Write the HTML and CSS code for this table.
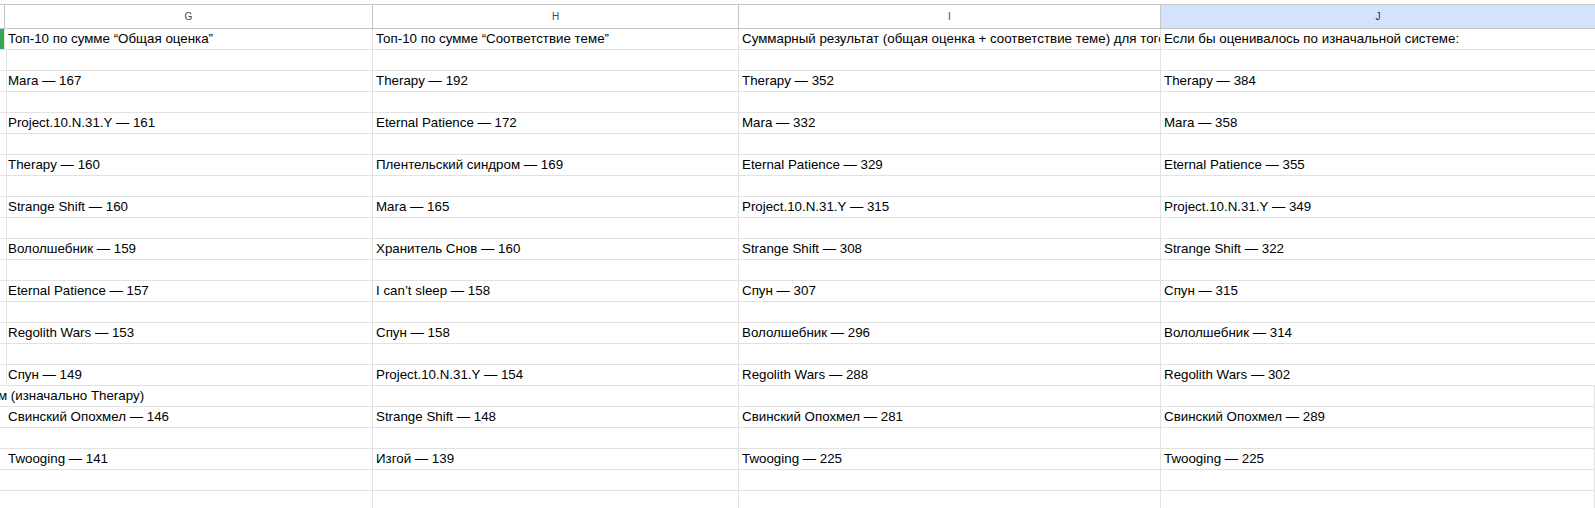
FILE: index.html
```html
<!DOCTYPE html>
<html lang="ru">
<head>
<meta charset="utf-8">
<title>Sheet</title>
<link rel="stylesheet" href="styles.css">
</head>
<body>
<div class="sheet">
  <div class="grid header">
    <div class="hcell"></div>
    <div class="hcell">G</div>
    <div class="hcell">H</div>
    <div class="hcell">I</div>
    <div class="hcell selected">J</div>
  </div>
  <div class="grid">
    <div class="cell active-mark"></div>
    <div class="cell">Топ-10 по сумме “Общая оценка”</div>
    <div class="cell">Топ-10 по сумме “Соответствие теме”</div>
    <div class="cell">Суммарный результат (общая оценка + соответствие теме) для того, чтобы узнать итоговое место</div>
    <div class="cell">Если бы оценивалось по изначальной системе:</div>

    <div class="cell"></div><div class="cell"></div><div class="cell"></div><div class="cell"></div><div class="cell"></div>

    <div class="cell"></div>
    <div class="cell">Mara — 167</div>
    <div class="cell">Therapy — 192</div>
    <div class="cell">Therapy — 352</div>
    <div class="cell">Therapy — 384</div>

    <div class="cell"></div><div class="cell"></div><div class="cell"></div><div class="cell"></div><div class="cell"></div>

    <div class="cell"></div>
    <div class="cell">Project.10.N.31.Y — 161</div>
    <div class="cell">Eternal Patience — 172</div>
    <div class="cell">Mara — 332</div>
    <div class="cell">Mara — 358</div>

    <div class="cell"></div><div class="cell"></div><div class="cell"></div><div class="cell"></div><div class="cell"></div>

    <div class="cell"></div>
    <div class="cell">Therapy — 160</div>
    <div class="cell">Плентельский синдром — 169</div>
    <div class="cell">Eternal Patience — 329</div>
    <div class="cell">Eternal Patience — 355</div>

    <div class="cell"></div><div class="cell"></div><div class="cell"></div><div class="cell"></div><div class="cell"></div>

    <div class="cell"></div>
    <div class="cell">Strange Shift — 160</div>
    <div class="cell">Mara — 165</div>
    <div class="cell">Project.10.N.31.Y — 315</div>
    <div class="cell">Project.10.N.31.Y — 349</div>

    <div class="cell"></div><div class="cell"></div><div class="cell"></div><div class="cell"></div><div class="cell"></div>

    <div class="cell"></div>
    <div class="cell">Вололшебник — 159</div>
    <div class="cell">Хранитель Снов — 160</div>
    <div class="cell">Strange Shift — 308</div>
    <div class="cell">Strange Shift — 322</div>

    <div class="cell"></div><div class="cell"></div><div class="cell"></div><div class="cell"></div><div class="cell"></div>

    <div class="cell"></div>
    <div class="cell">Eternal Patience — 157</div>
    <div class="cell">I can’t sleep — 158</div>
    <div class="cell">Спун — 307</div>
    <div class="cell">Спун — 315</div>

    <div class="cell"></div><div class="cell"></div><div class="cell"></div><div class="cell"></div><div class="cell"></div>

    <div class="cell"></div>
    <div class="cell">Regolith Wars — 153</div>
    <div class="cell">Спун — 158</div>
    <div class="cell">Вололшебник — 296</div>
    <div class="cell">Вололшебник — 314</div>

    <div class="cell"></div><div class="cell"></div><div class="cell"></div><div class="cell"></div><div class="cell"></div>

    <div class="cell"></div>
    <div class="cell">Спун — 149</div>
    <div class="cell">Project.10.N.31.Y — 154</div>
    <div class="cell">Regolith Wars — 288</div>
    <div class="cell">Regolith Wars — 302</div>

    <div class="cell overflow"><span class="overflow-text">м (изначально Therapy)</span></div>
    <div class="cell"></div><div class="cell"></div><div class="cell"></div>

    <div class="cell"></div>
    <div class="cell">Свинский Опохмел — 146</div>
    <div class="cell">Strange Shift — 148</div>
    <div class="cell">Свинский Опохмел — 281</div>
    <div class="cell">Свинский Опохмел — 289</div>

    <div class="cell"></div><div class="cell"></div><div class="cell"></div><div class="cell"></div><div class="cell"></div>

    <div class="cell"></div>
    <div class="cell">Twooging — 141</div>
    <div class="cell">Изгой — 139</div>
    <div class="cell">Twooging — 225</div>
    <div class="cell">Twooging — 225</div>

    <div class="cell"></div><div class="cell"></div><div class="cell"></div><div class="cell"></div><div class="cell"></div>
    <div class="cell"></div><div class="cell"></div><div class="cell"></div><div class="cell"></div><div class="cell"></div>
  </div>
</div>
</body>
</html>
```
FILE: styles.css
```css
html, body {
  margin: 0;
  padding: 0;
  background: #ffffff;
  overflow: hidden;
}

body {
  width: 1595px;
  height: 508px;
  font-family: "Liberation Sans", Arial, sans-serif;
  color: #000000;
}

.sheet {
  padding-top: 4px;
}

.grid {
  display: grid;
  grid-template-columns: 5px 368px 366px 422px 1fr;
}

.header {
  border-top: 1px solid #c4c7c5;
}

.hcell {
  box-sizing: border-box;
  height: 24px;
  border-right: 1px solid #c4c7c5;
  border-bottom: 1px solid #c4c7c5;
  font-size: 10px;
  line-height: 23px;
  text-align: center;
  color: #444746;
  background: #ffffff;
}

.hcell.selected {
  background: #d3e3fd;
  color: #0b2c6b;
  border-right: none;
}

.cell {
  box-sizing: border-box;
  height: 21px;
  border-right: 1px solid #e2e2e3;
  border-bottom: 1px solid #e2e2e3;
  padding: 0 3px;
  font-size: 13.33px;
  line-height: 20px;
  white-space: nowrap;
  overflow: hidden;
}

.cell:nth-child(5n) {
  border-right: none;
}

.active-mark {
  background: #34a853;
  padding: 0;
}

.overflow {
  grid-column: span 2;
  padding: 0;
}

.overflow-text {
  display: inline-block;
  margin-left: -2px;
}
```
